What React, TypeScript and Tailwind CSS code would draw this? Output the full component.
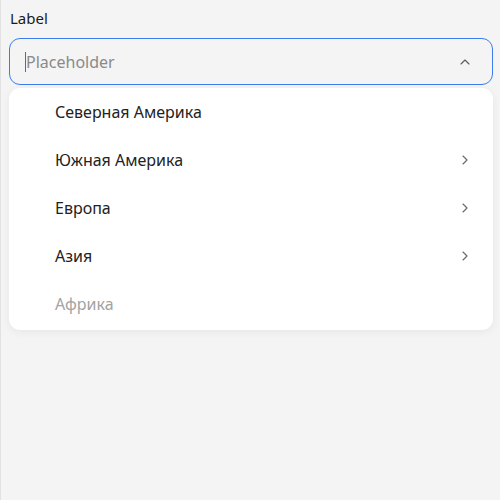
import { ChevronRight, ChevronUp } from 'lucide-react';

interface Option {
  label: string;
  hasChildren?: boolean;
  disabled?: boolean;
}

const options: Option[] = [
  { label: 'Северная Америка' },
  { label: 'Южная Америка', hasChildren: true },
  { label: 'Европа', hasChildren: true },
  { label: 'Азия', hasChildren: true },
  { label: 'Африка', disabled: true }
];

export default function App() {
  return (
    <div
      className="w-[500px] h-[500px] bg-[#f4f4f4] border-l border-[#e2e2e2] pl-2 pr-[7px] pt-[7px]"
      style={{ fontFamily: '"Noto Sans", "Open Sans", sans-serif' }}
    >
      <div className="text-[15px] leading-[22px] text-[#1a1a1a] pl-px">Label</div>

      <div className="mt-[9px] h-[47px] rounded-[11px] border border-[#3b7cf0] bg-[#f4f4f4] flex items-center pl-[15px] pr-[19px]">
        <div className="w-px h-[20px] bg-[#2f6fe4]" />
        <span className="flex-1 text-[16px] text-[#8a8a8a]">Placeholder</span>
        <ChevronUp className="w-4 h-4 text-[#5f5f5f]" strokeWidth={1.75} />
      </div>

      <div className="mt-[3px] bg-white rounded-[11px] shadow-[0_2px_8px_rgba(0,0,0,0.06)] pb-[2px]">
        {options.map((option, index) => (
          <div key={index} className="h-12 flex items-center pl-[46px] pr-[20px]">
            <span
              className={`flex-1 text-[16px] ${option.disabled ? 'text-[#a3a3a3]' : 'text-[#222222]'}`}
            >
              {option.label}
            </span>
            {option.hasChildren && (
              <ChevronRight className="w-4 h-4 text-[#6b6b6b]" strokeWidth={1.75} />
            )}
          </div>
        ))}
      </div>
    </div>
  );
}
